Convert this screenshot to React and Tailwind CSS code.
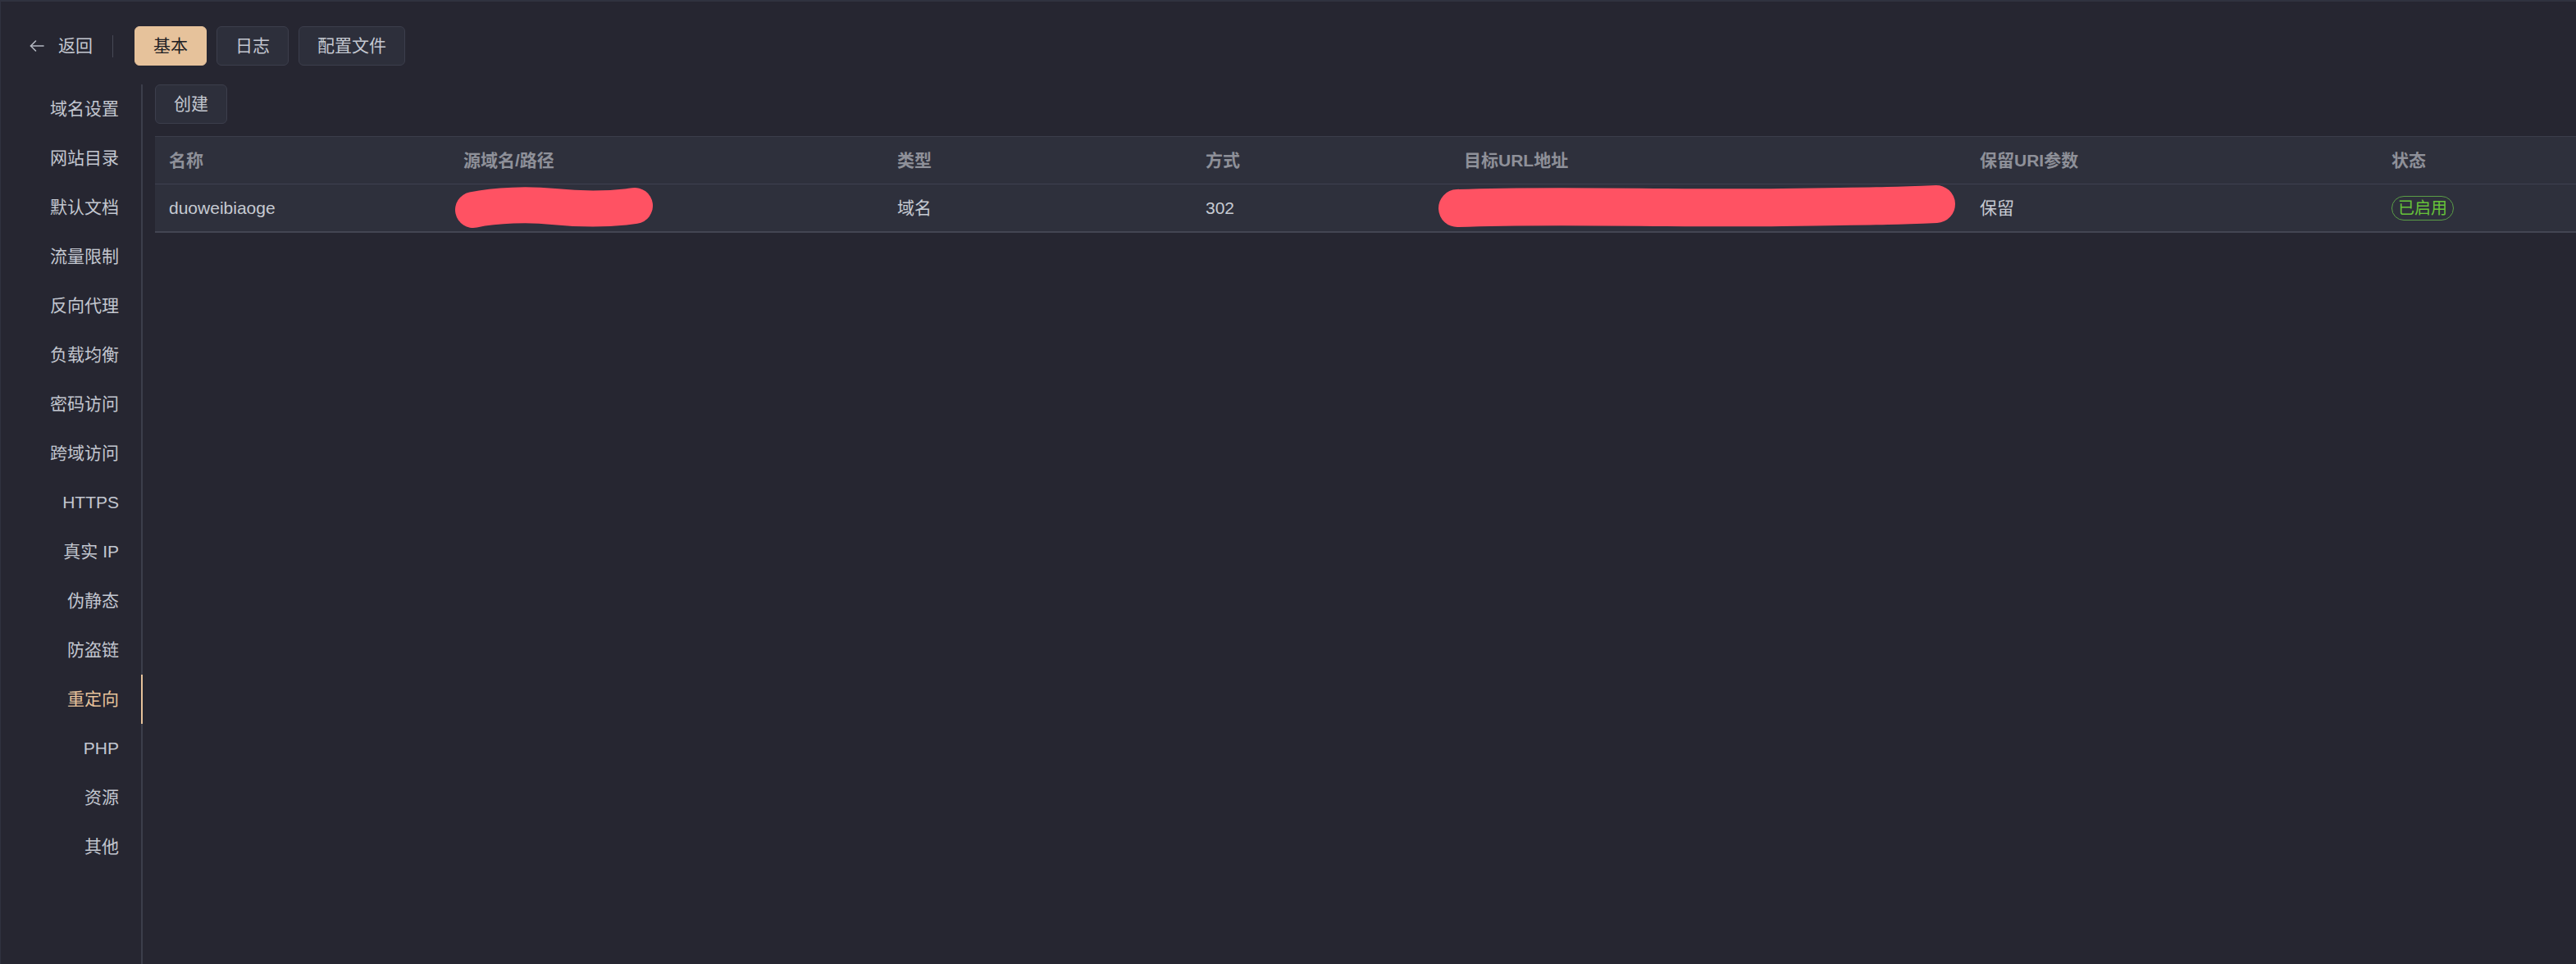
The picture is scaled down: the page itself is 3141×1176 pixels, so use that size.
import React from "react";

const menu = [
  "域名设置",
  "网站目录",
  "默认文档",
  "流量限制",
  "反向代理",
  "负载均衡",
  "密码访问",
  "跨域访问",
  "HTTPS",
  "真实 IP",
  "伪静态",
  "防盗链",
  "重定向",
  "PHP",
  "资源",
  "其他",
];

const columns = [
  { title: "名称", width: "w-[359px]" },
  { title: "源域名/路径", width: "w-[529px]" },
  { title: "类型", width: "w-[376px]" },
  { title: "方式", width: "w-[315px]" },
  { title: "目标URL地址", width: "w-[629px]" },
  { title: "保留URI参数", width: "w-[502px]" },
  { title: "状态", width: "flex-1" },
];

// redaction marks drawn over the hidden values
const Scribble = ({ w, h, d, stroke, className }) => (
  <svg width={w} height={h} viewBox={`0 0 ${w} ${h}`} overflow="visible" className={className}>
    <path d={d} fill="none" stroke="#ff5263" strokeWidth={stroke} strokeLinecap="round" strokeLinejoin="round" />
  </svg>
);

const TabButton = ({ label, active }) => (
  <button
    className={
      active
        ? "h-[48px] px-[22px] rounded-[6px] border border-[#e6c29b] bg-[#e6c29b] text-[#1e1e24]"
        : "h-[48px] px-[22px] rounded-[6px] border border-[#3c3e4c] bg-[#2d2f3b] text-[#c3c7d0]"
    }
  >
    {label}
  </button>
);

const App = () => {
  const active = "重定向";

  return (
    <div className="min-h-screen flex flex-col bg-[#262631] border-t-2 border-l border-[#30323f] text-[21px] font-['Liberation_Sans','Noto_Sans_CJK_SC',sans-serif]">
      {/* Top bar */}
      <div className="flex items-center pt-[30px] pl-[35px]">
        <div className="flex items-center text-[#c3c7d0]">
          <svg width="18" height="16" viewBox="0 0 18 16" fill="none" stroke="#b4b8c2" strokeWidth="1.6" strokeLinecap="round" strokeLinejoin="round">
            <path d="M17 8H1.5" />
            <path d="M7.5 2L1.5 8l6 6" />
          </svg>
          <span className="ml-[17px]">返回</span>
        </div>
        <div className="ml-[24px] w-px h-[27px] bg-[#464855]" />
        <div className="ml-[26px] flex gap-[12px]">
          <TabButton label="基本" active />
          <TabButton label="日志" />
          <TabButton label="配置文件" />
        </div>
      </div>

      {/* Body */}
      <div className="flex flex-1 mt-[23px]">
        {/* Side menu */}
        <div className="w-[173px] shrink-0 border-r-2 border-[#3c3e4b]">
          {menu.map((item) => (
            <div
              key={item}
              className={
                item === active
                  ? "h-[60px] flex items-center justify-end pr-[27px] -mr-[2px] border-r-2 border-[#e6c29b] text-[#e6c29b]"
                  : "h-[60px] flex items-center justify-end pr-[27px] -mr-[2px] border-r-2 border-transparent text-[#c3c7d0]"
              }
            >
              {item}
            </div>
          ))}
        </div>

        {/* Content */}
        <div className="flex-1 pl-[15px] min-w-0">
          <button className="h-[48px] px-[22px] rounded-[6px] border border-[#3c3e4c] bg-[#2d2f3b] text-[#c3c7d0]">
            创建
          </button>

          <div className="mt-[15px] bg-[#2e303c] border-t border-[#3b3d4a]">
            {/* Header */}
            <div className="flex h-[58px] border-b border-[#3f4150]">
              {columns.map((c) => (
                <div key={c.title} className={`${c.width} shrink-0 flex items-center pl-[17px] font-bold text-[#8e9099]`}>
                  {c.title}
                </div>
              ))}
            </div>

            {/* Row */}
            <div className="flex h-[59px] border-b-2 border-[#434553] text-[#c6cad2]">
              <div className="w-[359px] shrink-0 flex items-center pl-[17px]">duoweibiaoge</div>
              <div className="w-[529px] shrink-0 flex items-center relative">
                <Scribble
                  w={241}
                  h={46}
                  stroke={44}
                  d="M22 26 C 50 20, 90 19, 120 22 S 185 26, 219 21"
                  className="absolute left-[7px] top-[5px]"
                />
              </div>
              <div className="w-[376px] shrink-0 flex items-center pl-[17px]">域名</div>
              <div className="w-[315px] shrink-0 flex items-center pl-[17px]">302</div>
              <div className="w-[629px] shrink-0 flex items-center relative">
                <Scribble
                  w={632}
                  h={50}
                  stroke={46}
                  d="M24 28 C 150 23, 280 29, 420 27 S 560 25, 608 23"
                  className="absolute -left-[15px] top-[1px]"
                />
              </div>
              <div className="w-[502px] shrink-0 flex items-center pl-[17px]">保留</div>
              <div className="flex-1 flex items-center pl-[17px]">
                <span className="h-[30px] px-[7px] flex items-center rounded-full border border-[#5a9e47] text-[20px] text-[#67c23a]">
                  已启用
                </span>
              </div>
            </div>
          </div>
        </div>
      </div>
    </div>
  );
};

export default App;
